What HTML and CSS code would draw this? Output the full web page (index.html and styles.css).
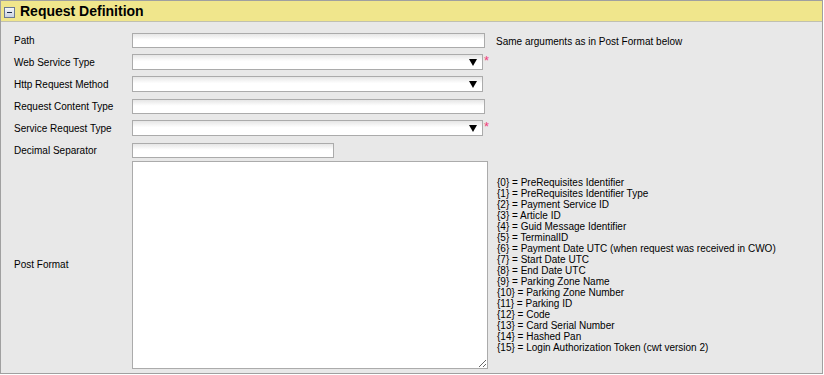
FILE: index.html
```html
<!DOCTYPE html>
<html lang="en">
<head>
  <meta charset="UTF-8">
  <title>Request Definition</title>
  <link rel="stylesheet" href="styles.css">
</head>
<body>

  <section class="panel">
    <header class="panel-head">
      <span class="toggle"><span class="minus"></span></span>
      <h2>Request Definition</h2>
    </header>

    <div class="panel-body">
      <div class="form-grid">
        <label>Path</label>
        <div class="field"><input type="text" class="wide"></div>
        <div class="note">Same arguments as in Post Format below</div>

        <label>Web Service Type</label>
        <div class="field"><div class="select"><span class="arrow"></span></div><span class="req">*</span></div>
        <div></div>

        <label>Http Request Method</label>
        <div class="field"><div class="select"><span class="arrow"></span></div></div>
        <div></div>

        <label>Request Content Type</label>
        <div class="field"><input type="text" class="wide"></div>
        <div></div>

        <label>Service Request Type</label>
        <div class="field"><div class="select"><span class="arrow"></span></div><span class="req">*</span></div>
        <div></div>

        <label>Decimal Separator</label>
        <div class="field"><input type="text" class="short"></div>
        <div></div>

        <label class="post-label">Post Format</label>
        <div class="field"><textarea></textarea></div>
        <ul class="args">
          <li>{0} = PreRequisites Identifier</li>
          <li>{1} = PreRequisites Identifier Type</li>
          <li>{2} = Payment Service ID</li>
          <li>{3} = Article ID</li>
          <li>{4} = Guid Message Identifier</li>
          <li>{5} = TerminalID</li>
          <li>{6} = Payment Date UTC (when request was received in CWO)</li>
          <li>{7} = Start Date UTC</li>
          <li>{8} = End Date UTC</li>
          <li>{9} = Parking Zone Name</li>
          <li>{10} = Parking Zone Number</li>
          <li>{11} = Parking ID</li>
          <li>{12} = Code</li>
          <li>{13} = Card Serial Number</li>
          <li>{14} = Hashed Pan</li>
          <li>{15} = Login Authorization Token (cwt version 2)</li>
        </ul>
      </div>
    </div>
  </section>

</body>
</html>
```

FILE: styles.css
```css
:root {
  --head-bg: #F0E68C;
  --body-bg: #E8E8E8;
  --border: #A0A0A0;
  --field-border: #ABABAB;
  --text-color: #000;
}

body {
  margin: 0;
  padding: 0;
  background-color: #fff;
  font-family: 'Liberation Sans', Arial, sans-serif;
  font-size: 10px;
  color: var(--text-color);
}

.panel {
  width: 821px;
  height: 373px;
  border: 1px solid var(--border);
  border-top: none;
  background-color: var(--body-bg);
  display: flex;
  flex-direction: column;
}

.panel-head {
  display: flex;
  align-items: center;
  gap: 5px;
  height: 20px;
  padding: 0 0 0 3px;
  background-color: var(--head-bg);
  border-top: 1px solid var(--border);
  border-bottom: 1px solid #C0C0B0;
}

.panel-head h2 {
  margin: 0;
  font-size: 14px;
  font-weight: bold;
}

.toggle {
  width: 9px;
  height: 9px;
  border: 1px solid #6A7A94;
  background: linear-gradient(#F4F6FA, #C9D2E2);
  display: flex;
  align-items: center;
  justify-content: center;
  margin-top: 2px;
}

.minus {
  width: 5px;
  height: 1px;
  background-color: #1A2A4A;
}

.panel-body {
  padding: 10px 0 0 13px;
}

.form-grid {
  display: grid;
  grid-template-columns: 118px 363px 1fr;
  row-gap: 6px;
  align-items: center;
}

.form-grid label {
  line-height: 14px;
  padding-top: 2px;
}

.form-grid .post-label {
  margin-top: -6px;
}

.field {
  display: flex;
  align-items: flex-start;
}

input, .select, textarea {
  box-sizing: border-box;
  border: 1px solid var(--field-border);
  background: linear-gradient(#E6E6E6, #FFFFFF 45%);
  font-family: inherit;
  font-size: 11px;
  margin: 0;
  padding: 0 2px;
}

input {
  height: 15px;
}

input.wide {
  width: 353px;
}

input.short {
  width: 202px;
}

.select {
  width: 351px;
  height: 16px;
  display: flex;
  align-items: center;
  justify-content: flex-end;
  padding-right: 5px;
}

.arrow {
  width: 0;
  height: 0;
  border-left: 4px solid transparent;
  border-right: 4px solid transparent;
  border-top: 7px solid #000;
}

.req {
  color: #F0407A;
  font-size: 13px;
  line-height: 10px;
  margin: 2px 0 0 1px;
}

textarea {
  width: 356px;
  height: 208px;
  margin-top: -3px;
  background: #fff;
}

.note {
  padding: 2px 0 0 1px;
}

.args {
  list-style: none;
  margin: -4px 0 0 0;
  padding: 0 0 0 2px;
  line-height: 11px;
}
```
